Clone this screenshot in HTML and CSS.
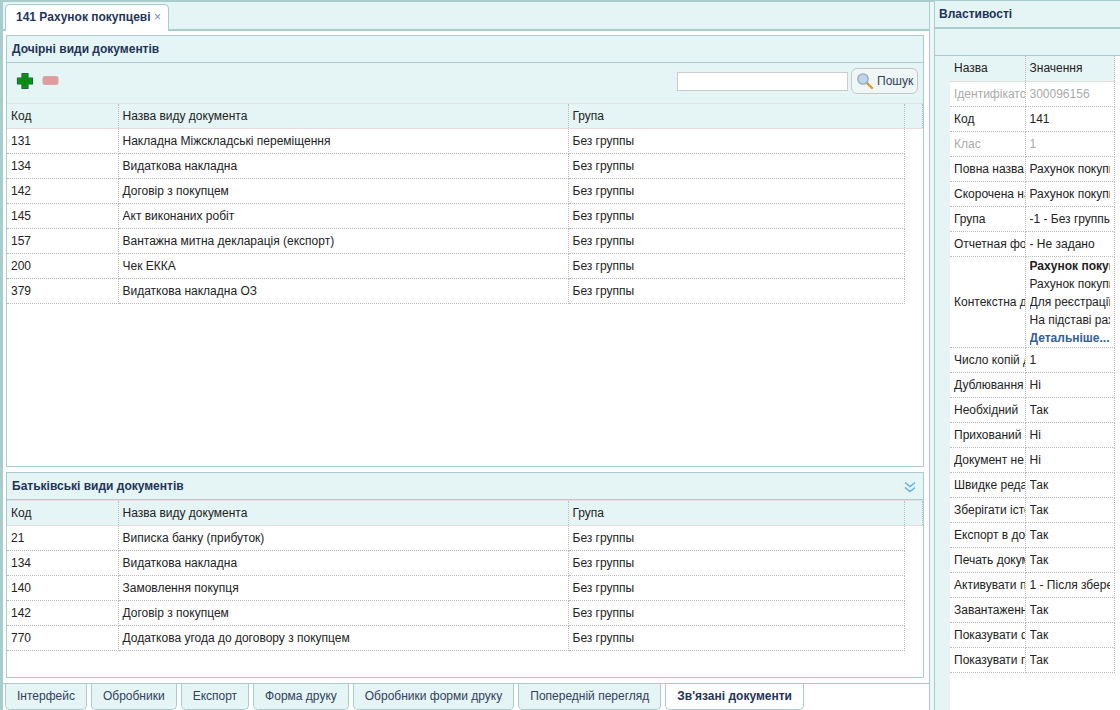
FILE: index.html
```html
<!DOCTYPE html>
<html lang="uk">
<head>
    <meta charset="UTF-8">
    <title>141 Рахунок покупцеві</title>
    <link rel="stylesheet" href="styles.css">
</head>
<body>
<div class="layout">
    <main class="workspace">
        <div class="doc-tabs">
            <div class="doc-tab">141 Рахунок покупцеві <span class="doc-tab-close">&times;</span></div>
        </div>

        <div class="workspace-body">
            <section class="panel panel-children">
                <h2 class="panel-title">Дочірні види документів</h2>
                <div class="toolbar">
                    <svg class="icon-btn" width="18" height="18" viewBox="0 0 18 18">
                        <path d="M6 1.5h6v4.5h4.500v6H12v4.500H6V12H1.500V6H6z" fill="#0c9a1c" stroke="#1c6a2c" stroke-width="1.200" stroke-linejoin="round"/>
                        <path d="M7.500 3.500h3V7.500h4v3h-4v4h-3v-4h-4v-3h4z" fill="#078a12"/>
                    </svg>
                    <svg class="icon-btn" width="18" height="18" viewBox="0 0 18 18">
                        <rect x="1" y="4.500" width="15" height="8" rx="1.500" fill="#e09c9c" stroke="#d4a8a8"/>
                    </svg>
                    <input class="search-input" type="text">
                    <button class="search-btn">
                        <svg width="18" height="18" viewBox="0 0 18 18">
                            <path d="M10.500 10.500l5.500 5.500" stroke="#e0962c" stroke-width="2.400" stroke-linecap="round"/>
                            <circle cx="7" cy="7" r="5.200" fill="#bcd6ee" stroke="#9aa8b4" stroke-width="1.300"/>
                        </svg>
                        Пошук
                    </button>
                </div>
                <table class="grid">
                    <colgroup><col class="col-code"><col class="col-name"><col class="col-group"><col></colgroup>
                    <thead><tr><th>Код</th><th>Назва виду документа</th><th>Група</th><th></th></tr></thead>
                    <tbody>
                        <tr><td>131</td><td>Накладна Міжскладські переміщення</td><td>Без группы</td></tr>
                        <tr><td>134</td><td>Видаткова накладна</td><td>Без группы</td></tr>
                        <tr><td>142</td><td>Договір з покупцем</td><td>Без группы</td></tr>
                        <tr><td>145</td><td>Акт виконаних робіт</td><td>Без группы</td></tr>
                        <tr><td>157</td><td>Вантажна митна декларація (експорт)</td><td>Без группы</td></tr>
                        <tr><td>200</td><td>Чек ЕККА</td><td>Без группы</td></tr>
                        <tr><td>379</td><td>Видаткова накладна ОЗ</td><td>Без группы</td></tr>
                    </tbody>
                </table>
            </section>

            <section class="panel panel-parents">
                <h2 class="panel-title">
                    Батьківські види документів
                    <svg class="collapse-icon" width="12" height="12" viewBox="0 0 12 12">
                        <path d="M1 1.500l5 4 5-4M1 6.500l5 4 5-4" fill="none" stroke="#5ab0e8" stroke-width="1.400"/>
                    </svg>
                </h2>
                <table class="grid">
                    <colgroup><col class="col-code"><col class="col-name"><col class="col-group"><col></colgroup>
                    <thead><tr><th>Код</th><th>Назва виду документа</th><th>Група</th><th></th></tr></thead>
                    <tbody>
                        <tr><td>21</td><td>Виписка банку (прибуток)</td><td>Без группы</td></tr>
                        <tr><td>134</td><td>Видаткова накладна</td><td>Без группы</td></tr>
                        <tr><td>140</td><td>Замовлення покупця</td><td>Без группы</td></tr>
                        <tr><td>142</td><td>Договір з покупцем</td><td>Без группы</td></tr>
                        <tr><td>770</td><td>Додаткова угода до договору з покупцем</td><td>Без группы</td></tr>
                    </tbody>
                </table>
            </section>
        </div>

        <nav class="bottom-tabs">
            <a class="bottom-tab">Інтерфейс</a>
            <a class="bottom-tab">Обробники</a>
            <a class="bottom-tab">Експорт</a>
            <a class="bottom-tab">Форма друку</a>
            <a class="bottom-tab">Обробники форми друку</a>
            <a class="bottom-tab">Попередній перегляд</a>
            <a class="bottom-tab active">Зв'язані документи</a>
        </nav>
    </main>

    <div class="splitter"></div>

    <aside class="props">
        <h2 class="props-title">Властивості</h2>
        <div class="props-toolbar"></div>
        <div class="props-body">
            <div class="props-gutter"></div>
            <table class="grid props-grid">
                <colgroup><col class="col-prop"><col></colgroup>
                <thead><tr><th>Назва</th><th>Значення</th></tr></thead>
                <tbody>
                    <tr class="muted"><td><div class="clip">Ідентифікатор</div></td><td><div class="clip">300096156</div></td></tr>
                    <tr><td><div class="clip">Код</div></td><td><div class="clip">141</div></td></tr>
                    <tr class="muted"><td><div class="clip">Клас</div></td><td><div class="clip">1</div></td></tr>
                    <tr><td><div class="clip">Повна назва</div></td><td><div class="clip">Рахунок покупцеві</div></td></tr>
                    <tr><td><div class="clip">Скорочена назва</div></td><td><div class="clip">Рахунок покупцеві</div></td></tr>
                    <tr><td><div class="clip">Група</div></td><td><div class="clip">-1 - Без группы</div></td></tr>
                    <tr><td><div class="clip">Отчетная форма</div></td><td><div class="clip">- Не задано</div></td></tr>
                    <tr class="context-row">
                        <td><div class="clip">Контекстна довідка</div></td>
                        <td>
                            <div class="clip"><b>Рахунок покупцеві</b></div>
                            <div class="clip">Рахунок покупцеві</div>
                            <div class="clip">Для реєстрації рахунку</div>
                            <div class="clip">На підставі рахунку</div>
                            <div class="clip"><b class="more">Детальніше...</b></div>
                        </td>
                    </tr>
                    <tr><td><div class="clip">Число копій друку</div></td><td><div class="clip">1</div></td></tr>
                    <tr><td><div class="clip">Дублювання</div></td><td><div class="clip">Ні</div></td></tr>
                    <tr><td><div class="clip">Необхідний</div></td><td><div class="clip">Так</div></td></tr>
                    <tr><td><div class="clip">Прихований</div></td><td><div class="clip">Ні</div></td></tr>
                    <tr><td><div class="clip">Документ не</div></td><td><div class="clip">Ні</div></td></tr>
                    <tr><td><div class="clip">Швидке редагування</div></td><td><div class="clip">Так</div></td></tr>
                    <tr><td><div class="clip">Зберігати історію</div></td><td><div class="clip">Так</div></td></tr>
                    <tr><td><div class="clip">Експорт в документ</div></td><td><div class="clip">Так</div></td></tr>
                    <tr><td><div class="clip">Печать документа</div></td><td><div class="clip">Так</div></td></tr>
                    <tr><td><div class="clip">Активувати після</div></td><td><div class="clip">1 - Після збереження</div></td></tr>
                    <tr><td><div class="clip">Завантаження</div></td><td><div class="clip">Так</div></td></tr>
                    <tr><td><div class="clip">Показувати форму</div></td><td><div class="clip">Так</div></td></tr>
                    <tr><td><div class="clip">Показувати панель</div></td><td><div class="clip">Так</div></td></tr>
                </tbody>
            </table>
        </div>
    </aside>
</div>
</body>
</html>
```

FILE: styles.css
```css
* { box-sizing: border-box; }
html, body { margin: 0; height: 100%; overflow: hidden; }
body {
    font-family: "Liberation Sans", Arial, sans-serif;
    font-size: 12px;
    color: #222;
    background: #a9cdcd;
}
.layout {
    display: flex;
    height: 710px;
}

/* Left side */
.workspace {
    width: 929px;
    height: 708px;
    margin-top: 2px;
    display: flex;
    flex-direction: column;
    background: #fff;
    border-left: 3px solid #a9cdcd;
}
.doc-tabs {
    height: 29px;
    padding: 2px 0 0 2px;
    background: #e5f4f4;
    border-bottom: 2px solid #a9cdcd;
    display: flex;
}
.doc-tab {
    width: 164px;
    height: 27px;
    padding-left: 10px;
    line-height: 24px;
    font-weight: bold;
    color: #1f3558;
    background: #fff;
    border: 1px solid #a9cdcd;
    border-bottom: none;
    border-radius: 5px 5px 0 0;
}
.doc-tab-close { font-weight: normal; color: #6a8cb0; }
.workspace-body {
    flex: 1;
    padding: 4px 5px 5px 3px;
    display: flex;
    flex-direction: column;
    gap: 5px;
    border-bottom: 1px solid #a9cdcd;
}
.panel {
    border: 1px solid #a9cdcd;
    background: #fff;
}
.panel-children { height: 432px; }
.panel-parents { height: 206px; }
.panel-title {
    position: relative;
    margin: 0;
    height: 27px;
    padding-left: 5px;
    line-height: 26px;
    font-size: 12px;
    font-weight: bold;
    color: #1f3558;
    background: #e5f4f4;
    border-bottom: 1px solid #a9cdcd;
}
.collapse-icon { position: absolute; right: 7px; top: 8px; }
.toolbar {
    height: 40px;
    padding: 0 5px 4px 9px;
    display: flex;
    align-items: center;
    gap: 8px;
    background: #e5f4f4;
}
.icon-btn { flex: none; }
.search-input {
    width: 171px;
    height: 19px;
    margin-left: auto;
    border: 1px solid #ccc;
    background: #fff;
}
.search-btn {
    width: 67px;
    height: 26px;
    margin-left: -5px;
    padding: 0 0 0 4px;
    display: flex;
    align-items: center;
    gap: 3px;
    font: 12px "Liberation Sans", Arial, sans-serif;
    color: #33415c;
    background: #eef6f6;
    border: 1px solid #c8c8c8;
    border-radius: 6px;
}

/* Grids */
.grid {
    width: 100%;
    table-layout: fixed;
    border-collapse: collapse;
}
.grid th {
    height: 25px;
    padding: 0 4px;
    text-align: left;
    font-weight: normal;
    background: #e5f4f4;
    border-top: 1px solid #e3e0e0;
    border-bottom: 1px solid #e8dcdc;
    border-right: 1px dotted #bbb;
}
.grid td {
    height: 25px;
    padding: 0 4px;
    border-bottom: 1px dotted #bbb;
    border-right: 1px dotted #bbb;
}
.grid td:first-child { padding-right: 0; }
.col-code { width: 111px; }
.col-name { width: 450px; }
.col-group { width: 336px; }

/* Bottom tabs */
.bottom-tabs {
    height: 26px;
    padding-left: 2px;
    display: flex;
    gap: 4px;
    background: #fff;
}
.bottom-tab {
    height: 26px;
    padding: 0 11px;
    line-height: 24px;
    color: #33415c;
    background: #e5f4f4;
    border: 1px solid #a9cdcd;
    border-top: none;
    border-radius: 0 0 5px 5px;
}
.bottom-tab:nth-child(2) { padding: 0 11px; }
.bottom-tab.active {
    font-weight: bold;
    color: #1f3558;
    background: #fff;
}

.splitter {
    width: 6px;
    margin-top: 2px;
    background: #eef7f7;
    border-left: 1px solid #a9cdcd;
    border-right: 1px solid #a9cdcd;
}

/* Properties */
.props {
    width: 185px;
    margin-top: 1px;
    background: #fff;
    display: flex;
    flex-direction: column;
}
.props-title {
    margin: 0;
    height: 28px;
    padding-left: 4px;
    line-height: 26px;
    font-size: 12px;
    font-weight: bold;
    color: #1f3558;
    background: #e5f4f4;
    border-bottom: 2px solid #a9cdcd;
}
.props-toolbar {
    height: 27px;
    background: #e5f4f4;
    border-bottom: 1px solid #a9cdcd;
}
.props-body {
    flex: 1;
    display: flex;
}
.props-gutter {
    width: 15px;
    background: #e5f4f4;
}
.props-grid {
    width: 165px;
    height: 0;
    align-self: flex-start;
}
.props-grid th { border-top: none; }
.col-prop { width: 75px; }
.clip {
    overflow: hidden;
    white-space: nowrap;
}
.muted td { color: #aaa; }
.context-row td { height: 90px; }
.context-row .clip { line-height: 18px; }
.more { color: #33608f; }
```
